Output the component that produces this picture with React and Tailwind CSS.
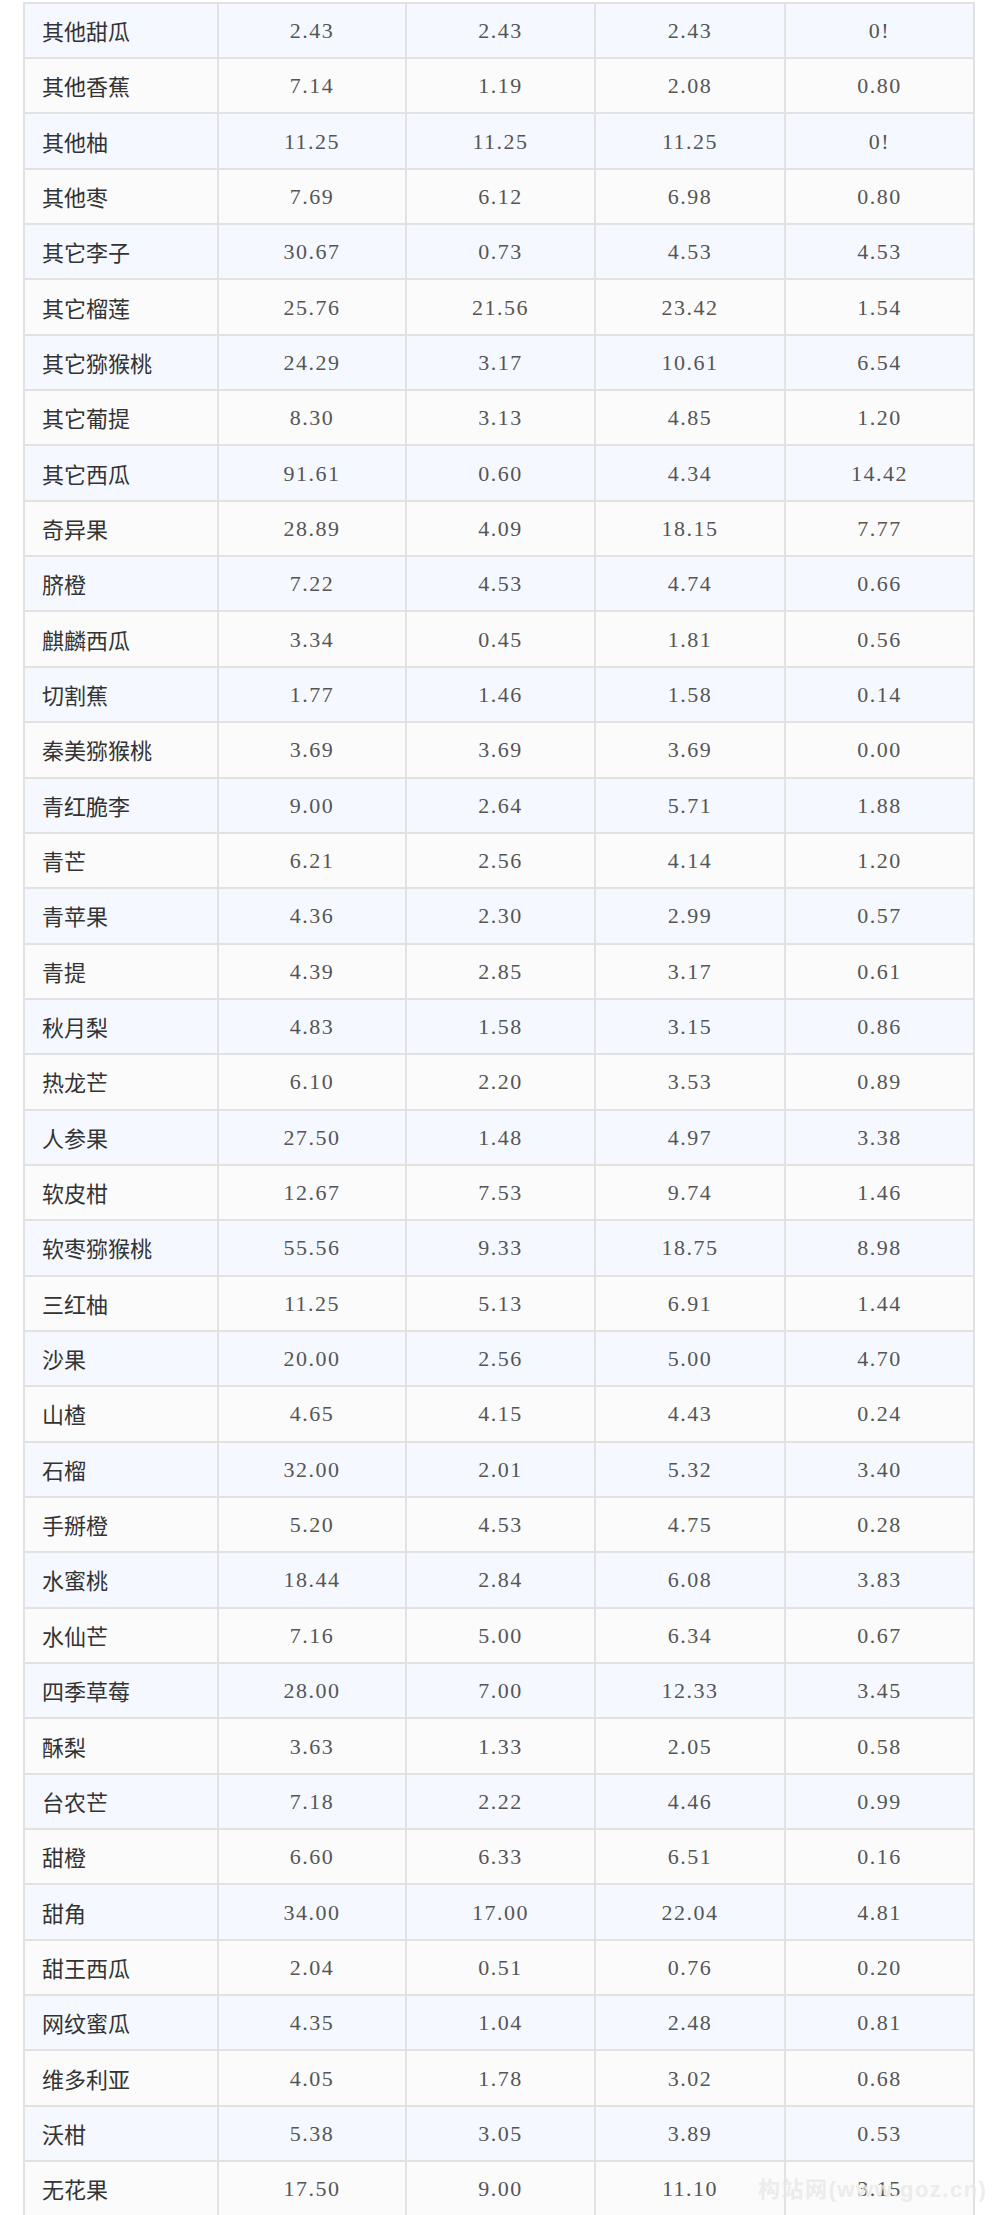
import React from "react";

const rows = [
  ["其他甜瓜", "2.43", "2.43", "2.43", "0!"],
  ["其他香蕉", "7.14", "1.19", "2.08", "0.80"],
  ["其他柚", "11.25", "11.25", "11.25", "0!"],
  ["其他枣", "7.69", "6.12", "6.98", "0.80"],
  ["其它李子", "30.67", "0.73", "4.53", "4.53"],
  ["其它榴莲", "25.76", "21.56", "23.42", "1.54"],
  ["其它猕猴桃", "24.29", "3.17", "10.61", "6.54"],
  ["其它葡提", "8.30", "3.13", "4.85", "1.20"],
  ["其它西瓜", "91.61", "0.60", "4.34", "14.42"],
  ["奇异果", "28.89", "4.09", "18.15", "7.77"],
  ["脐橙", "7.22", "4.53", "4.74", "0.66"],
  ["麒麟西瓜", "3.34", "0.45", "1.81", "0.56"],
  ["切割蕉", "1.77", "1.46", "1.58", "0.14"],
  ["秦美猕猴桃", "3.69", "3.69", "3.69", "0.00"],
  ["青红脆李", "9.00", "2.64", "5.71", "1.88"],
  ["青芒", "6.21", "2.56", "4.14", "1.20"],
  ["青苹果", "4.36", "2.30", "2.99", "0.57"],
  ["青提", "4.39", "2.85", "3.17", "0.61"],
  ["秋月梨", "4.83", "1.58", "3.15", "0.86"],
  ["热龙芒", "6.10", "2.20", "3.53", "0.89"],
  ["人参果", "27.50", "1.48", "4.97", "3.38"],
  ["软皮柑", "12.67", "7.53", "9.74", "1.46"],
  ["软枣猕猴桃", "55.56", "9.33", "18.75", "8.98"],
  ["三红柚", "11.25", "5.13", "6.91", "1.44"],
  ["沙果", "20.00", "2.56", "5.00", "4.70"],
  ["山楂", "4.65", "4.15", "4.43", "0.24"],
  ["石榴", "32.00", "2.01", "5.32", "3.40"],
  ["手掰橙", "5.20", "4.53", "4.75", "0.28"],
  ["水蜜桃", "18.44", "2.84", "6.08", "3.83"],
  ["水仙芒", "7.16", "5.00", "6.34", "0.67"],
  ["四季草莓", "28.00", "7.00", "12.33", "3.45"],
  ["酥梨", "3.63", "1.33", "2.05", "0.58"],
  ["台农芒", "7.18", "2.22", "4.46", "0.99"],
  ["甜橙", "6.60", "6.33", "6.51", "0.16"],
  ["甜角", "34.00", "17.00", "22.04", "4.81"],
  ["甜王西瓜", "2.04", "0.51", "0.76", "0.20"],
  ["网纹蜜瓜", "4.35", "1.04", "2.48", "0.81"],
  ["维多利亚", "4.05", "1.78", "3.02", "0.68"],
  ["沃柑", "5.38", "3.05", "3.89", "0.53"],
  ["无花果", "17.50", "9.00", "11.10", "3.15"],
];

const numCell =
  "flex items-center justify-center border-r-2 border-[#e2e2e2] font-['Liberation_Serif',serif] text-[22px] tracking-[1.5px] text-[#555]";

export default function App() {
  return (
    <div className="relative h-[2215px] overflow-hidden bg-white">
      {/* price table */}
      <div className="ml-[23px] mt-[1.7px] w-[952px] border-l-2 border-t-2 border-[#e2e2e2]">
        {rows.map((r, i) => (
          <div
            key={r[0]}
            className={`grid h-[55.35px] grid-cols-[194px_188px_189px_190px_189px] border-b-2 border-[#e2e2e2] ${
              i % 2 === 0 ? "bg-[#f5f9ff]" : "bg-[#fbfbfb]"
            }`}
          >
            <div className="flex items-center border-r-2 border-[#e2e2e2] pl-[17px] font-['Noto_Sans_CJK_SC',sans-serif] text-[22px] text-[#333]">
              {r[0]}
            </div>
            <div className={numCell}>{r[1]}</div>
            <div className={numCell}>{r[2]}</div>
            <div className={numCell}>{r[3]}</div>
            <div className={numCell}>{r[4]}</div>
          </div>
        ))}
      </div>

      {/* watermark */}
      <div className="absolute left-[758px] top-[2173px] whitespace-nowrap font-['Liberation_Sans','Noto_Sans_CJK_SC',sans-serif] text-[22px] font-bold tracking-[1.5px] text-[rgba(232,232,232,0.8)]">
        构站网(www.goz.cn)
      </div>
    </div>
  );
}
